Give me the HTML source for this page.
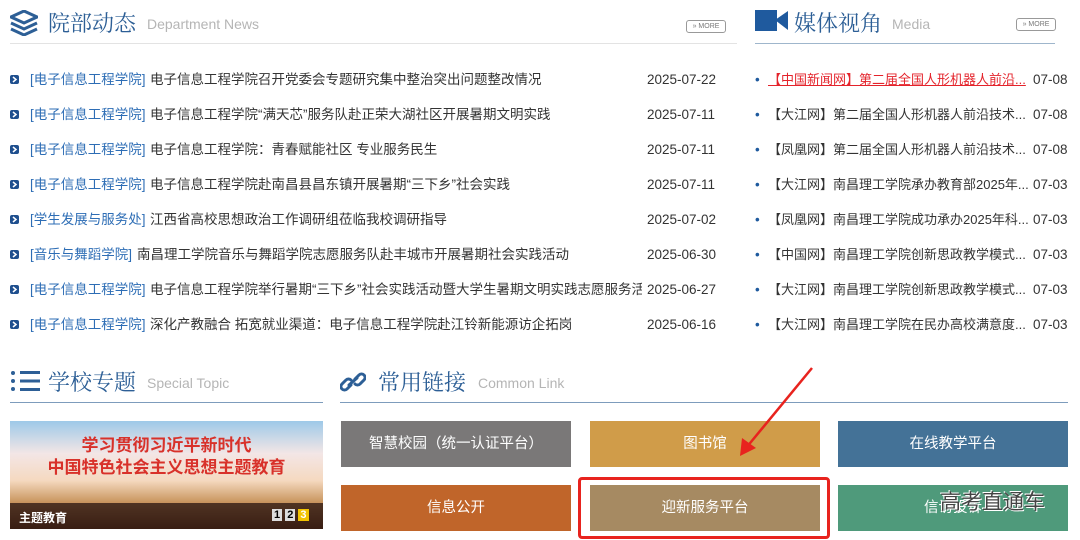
<!DOCTYPE html>
<html><head><meta charset="utf-8"><style>
body{margin:0;width:1080px;height:540px;background:#fff;position:relative;overflow:hidden;font-family:"Liberation Sans","Noto Sans CJK SC",sans-serif;}
.a{position:absolute;white-space:nowrap}
.t{font-family:"Liberation Serif","Noto Serif CJK SC",serif;font-size:22px;color:#2d5f96}
.e{font-size:14px;color:#b5b5b5}
.more{position:absolute;width:38px;height:11px;border:1px solid #999;border-radius:3px;font-size:7px;color:#777;text-align:center;line-height:11px}
.row{font-size:13.5px;color:#333}
.cat{color:#2d6db5}
.btn{position:absolute;width:230px;height:46px;color:#fff;font-size:14.5px;text-align:center;line-height:46px}
.bl{position:absolute;left:0;top:13px;width:9px;height:9px}
.mt{position:absolute;left:13px;font-size:13px}
</style></head><body>
<svg class="a" style="left:10px;top:10px" width="28" height="26" viewBox="0 0 28 26"><path d="M14 1L27 7 14 13 1 7Z" fill="none" stroke="#2d5f96" stroke-width="3"/><path d="M1 13l13 6 13-6M1 19l13 6 13-6" fill="none" stroke="#2d5f96" stroke-width="3"/></svg>
<div class="a t" style="left:48px;top:7px">院部动态</div>
<div class="a e" style="left:147px;top:16px">Department News</div>
<div class="more" style="left:686px;top:20px">» MORE</div>
<div class="a" style="left:10px;top:43px;width:727px;height:1px;background:#e3e3e3"></div>
<svg class="a" style="left:755px;top:10px" width="33" height="21"><rect x="0" y="0" width="22" height="21" fill="#1f5a9e"/><path d="M20 10L33 1V20Z" fill="#1f5a9e"/></svg>
<div class="a t" style="left:794px;top:7px">媒体视角</div>
<div class="a e" style="left:892px;top:16px">Media</div>
<div class="more" style="left:1016px;top:18px">» MORE</div>
<div class="a" style="left:755px;top:43px;width:300px;height:1px;background:#9fb6cc"></div>

<svg width="0" height="0" style="position:absolute"><defs><g id="b"><rect width="9" height="9" rx="2" fill="#1f4f8e"/><path d="M3 2l3 2.5-3 2.5" fill="none" stroke="#fff" stroke-width="1.5"/></g></defs></svg>

<div class="a row" style="left:10px;top:62px;line-height:35px;width:720px">
<div style="position:relative;height:35px"><svg class="bl"><use href="#b"/></svg><span class="cat" style="position:absolute;left:20px">[电子信息工程学院]</span><span style="position:absolute;left:140px">电子信息工程学院召开党委会专题研究集中整治突出问题整改情况</span><span style="position:absolute;left:637px">2025-07-22</span></div>
<div style="position:relative;height:35px"><svg class="bl"><use href="#b"/></svg><span class="cat" style="position:absolute;left:20px">[电子信息工程学院]</span><span style="position:absolute;left:140px">电子信息工程学院“满天芯”服务队赴正荣大湖社区开展暑期文明实践</span><span style="position:absolute;left:637px">2025-07-11</span></div>
<div style="position:relative;height:35px"><svg class="bl"><use href="#b"/></svg><span class="cat" style="position:absolute;left:20px">[电子信息工程学院]</span><span style="position:absolute;left:140px">电子信息工程学院：青春赋能社区 专业服务民生</span><span style="position:absolute;left:637px">2025-07-11</span></div>
<div style="position:relative;height:35px"><svg class="bl"><use href="#b"/></svg><span class="cat" style="position:absolute;left:20px">[电子信息工程学院]</span><span style="position:absolute;left:140px">电子信息工程学院赴南昌县昌东镇开展暑期“三下乡”社会实践</span><span style="position:absolute;left:637px">2025-07-11</span></div>
<div style="position:relative;height:35px"><svg class="bl"><use href="#b"/></svg><span class="cat" style="position:absolute;left:20px">[学生发展与服务处]</span><span style="position:absolute;left:140px">江西省高校思想政治工作调研组莅临我校调研指导</span><span style="position:absolute;left:637px">2025-07-02</span></div>
<div style="position:relative;height:35px"><svg class="bl"><use href="#b"/></svg><span class="cat" style="position:absolute;left:20px">[音乐与舞蹈学院]</span><span style="position:absolute;left:127px">南昌理工学院音乐与舞蹈学院志愿服务队赴丰城市开展暑期社会实践活动</span><span style="position:absolute;left:637px">2025-06-30</span></div>
<div style="position:relative;height:35px"><svg class="bl"><use href="#b"/></svg><span class="cat" style="position:absolute;left:20px">[电子信息工程学院]</span><span style="position:absolute;left:140px;width:492px;overflow:hidden">电子信息工程学院举行暑期“三下乡”社会实践活动暨大学生暑期文明实践志愿服务活</span><span style="position:absolute;left:637px;background:#fff">2025-06-27</span></div>
<div style="position:relative;height:35px"><svg class="bl"><use href="#b"/></svg><span class="cat" style="position:absolute;left:20px">[电子信息工程学院]</span><span style="position:absolute;left:140px">深化产教融合 拓宽就业渠道：电子信息工程学院赴江铃新能源访企拓岗</span><span style="position:absolute;left:637px">2025-06-16</span></div>
</div>

<div class="a row" style="left:755px;top:62px;line-height:35px;width:315px">
<div style="position:relative;height:35px"><span style="position:absolute;left:0;color:#1f5a9e">•</span><span class="mt" style="color:#e4232b;text-decoration:underline">【中国新闻网】第二届全国人形机器人前沿...</span><span style="position:absolute;left:278px">07-08</span></div>
<div style="position:relative;height:35px"><span style="position:absolute;left:0;color:#1f5a9e">•</span><span class="mt">【大江网】第二届全国人形机器人前沿技术...</span><span style="position:absolute;left:278px">07-08</span></div>
<div style="position:relative;height:35px"><span style="position:absolute;left:0;color:#1f5a9e">•</span><span class="mt">【凤凰网】第二届全国人形机器人前沿技术...</span><span style="position:absolute;left:278px">07-08</span></div>
<div style="position:relative;height:35px"><span style="position:absolute;left:0;color:#1f5a9e">•</span><span class="mt">【大江网】南昌理工学院承办教育部2025年...</span><span style="position:absolute;left:278px">07-03</span></div>
<div style="position:relative;height:35px"><span style="position:absolute;left:0;color:#1f5a9e">•</span><span class="mt">【凤凰网】南昌理工学院成功承办2025年科...</span><span style="position:absolute;left:278px">07-03</span></div>
<div style="position:relative;height:35px"><span style="position:absolute;left:0;color:#1f5a9e">•</span><span class="mt">【中国网】南昌理工学院创新思政教学模式...</span><span style="position:absolute;left:278px">07-03</span></div>
<div style="position:relative;height:35px"><span style="position:absolute;left:0;color:#1f5a9e">•</span><span class="mt">【大江网】南昌理工学院创新思政教学模式...</span><span style="position:absolute;left:278px">07-03</span></div>
<div style="position:relative;height:35px"><span style="position:absolute;left:0;color:#1f5a9e">•</span><span class="mt">【大江网】南昌理工学院在民办高校满意度...</span><span style="position:absolute;left:278px">07-03</span></div>
</div>

<svg class="a" style="left:10px;top:370px" width="30" height="22"><g fill="#2d5f96"><circle cx="3" cy="3" r="2"/><circle cx="3" cy="11" r="2"/><circle cx="3" cy="19" r="2"/><rect x="10" y="1" width="20" height="3"/><rect x="10" y="9.5" width="20" height="3"/><rect x="10" y="18" width="20" height="3"/></g></svg>
<div class="a t" style="left:48px;top:366px">学校专题</div>
<div class="a e" style="left:147px;top:375px">Special Topic</div>
<div class="a" style="left:10px;top:402px;width:313px;height:1px;background:#7d9cbc"></div>
<div class="a" style="left:10px;top:421px;width:313px;height:108px;background:linear-gradient(180deg,#9ec9e8 0%,#f3e6e6 30%,#f5d9c0 55%,#c9965f 75%,#6b3a22 100%)">
<div class="a" style="left:0;top:14px;width:313px;text-align:center;font-size:17px;line-height:22px;color:#d8312a;font-weight:bold">学习贯彻习近平新时代<br>中国特色社会主义思想主题教育</div>
<div class="a" style="left:0;top:82px;width:313px;height:26px;background:rgba(40,20,15,.75)"></div>
<div class="a" style="left:9px;top:88px;color:#fff;font-size:12px;font-weight:bold">主题教育</div>
<div class="a" style="left:262px;top:88px;font-size:11px;font-weight:bold"><span style="background:#ddd;padding:0 2px">1</span> <span style="background:#ddd;padding:0 2px">2</span> <span style="background:#f2c300;color:#fff;padding:0 2px">3</span></div>
</div>

<svg class="a" style="left:340px;top:370px" width="26" height="24" viewBox="0 0 26 24"><g fill="none" stroke="#2d5f96" stroke-width="3" stroke-linecap="round"><path d="M11 15l-4 4a3.5 3.5 0 0 1-5-5l4-4a3.5 3.5 0 0 1 5 0"/><path d="M15 9l4-4a3.5 3.5 0 0 1 5 5l-4 4a3.5 3.5 0 0 1-5 0"/><path d="M9 15l8-7"/></g></svg>
<div class="a t" style="left:378px;top:366px">常用链接</div>
<div class="a e" style="left:478px;top:375px">Common Link</div>
<div class="a" style="left:340px;top:402px;width:728px;height:1px;background:#7d9cbc"></div>
<div class="btn" style="left:341px;top:421px;background:#7a7878">智慧校园（统一认证平台）</div>
<div class="btn" style="left:590px;top:421px;background:#d09c49">图书馆</div>
<div class="btn" style="left:838px;top:421px;background:#447297">在线教学平台</div>
<div class="btn" style="left:341px;top:485px;background:#c0652a">信息公开</div>
<div class="btn" style="left:590px;top:485px;background:#a68a62">迎新服务平台</div>
<div class="btn" style="left:838px;top:485px;background:#4f9a7b">信访投诉</div>
<div class="a" style="left:578px;top:477px;width:246px;height:56px;border:3px solid #e8231e;border-radius:4px"></div>
<svg class="a" style="left:730px;top:360px" width="90" height="100"><path d="M82 8L16 88" stroke="#e8231e" stroke-width="2.5"/><path d="M10 96L12 78 26 88Z" fill="#e8231e"/></svg>
<div class="a" style="left:940px;top:486px;font-size:21px;color:#444;text-shadow:1px 1px 0 #fff,-1px -1px 0 #fff">高考直通车</div>
</body></html>
